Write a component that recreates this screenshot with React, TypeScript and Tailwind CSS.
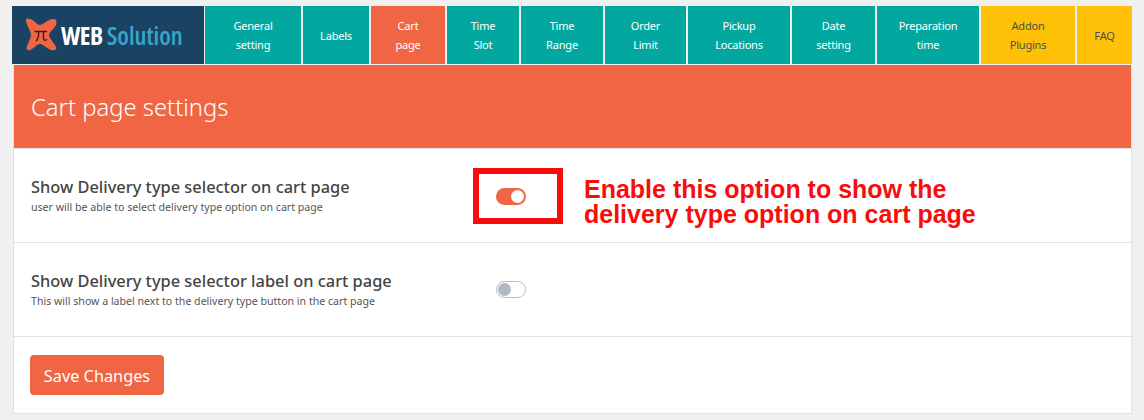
const tabs = [
  { lines: ["General", "setting"], width: "w-[96px]", color: "bg-[#02a79f] text-white" },
  { lines: ["Labels"], width: "w-[66px]", color: "bg-[#02a79f] text-white" },
  { lines: ["Cart", "page"], width: "w-[74px]", color: "bg-[#f06543] text-white" },
  { lines: ["Time", "Slot"], width: "w-[72px]", color: "bg-[#02a79f] text-white" },
  { lines: ["Time", "Range"], width: "w-[82px]", color: "bg-[#02a79f] text-white" },
  { lines: ["Order", "Limit"], width: "w-[81px]", color: "bg-[#02a79f] text-white" },
  { lines: ["Pickup", "Locations"], width: "w-[102px]", color: "bg-[#02a79f] text-white" },
  { lines: ["Date", "setting"], width: "w-[83px]", color: "bg-[#02a79f] text-white" },
  { lines: ["Preparation", "time"], width: "w-[102px]", color: "bg-[#02a79f] text-white" },
  { lines: ["Addon", "Plugins"], width: "w-[94px]", color: "bg-[#ffc107] text-[#4a4f57]" },
  { lines: ["FAQ"], width: "w-[55px]", color: "bg-[#ffc107] text-[#4a4f57]" },
];

function Logo() {
  return (
    <div className="flex h-full w-[192px] shrink-0 items-center bg-[#1a4262] pl-[12px]">
      <svg width="36" height="36" viewBox="0 0 36 36" className="shrink-0">
        <path
          d="M2 4 C1 1 4 1 6 2 C10 3 13 8 16 8 C19 8 24 2 29 2 C33 2 33 5 32 8 C30 12 25 15 25 18 C25 21 31 27 32 30 C33 33 30 34 27 33 C24 32 19 27 16 27 C13 27 9 32 6 33 C3 34 2 32 3 29 C4 26 7 21 7 18 C7 15 3 8 2 4 Z"
          fill="#f06543"
        />
        <path d="M10.5 14.5 H23 M14.5 14.5 C15 18.5 14 22 12 24 M19.5 14.5 V21 C19.5 24 22 24 23 22" fill="none" stroke="#3a1c14" strokeWidth="1.4" />
      </svg>
      <span className="ml-[1px] flex items-baseline font-['Open_Sans',sans-serif] text-[25px] leading-none font-bold tracking-[-0.5px] [font-stretch:75%]">
        <span className="text-white">WEB</span>
        <span className="ml-[4px] font-semibold tracking-[0px] text-[#3aa6c9]">Solution</span>
      </span>
    </div>
  );
}

function Toggle({ on }: { on: boolean }) {
  if (on) {
    return (
      <div className="flex h-[17px] w-[30px] items-center justify-end rounded-full bg-[#f06543] pr-[2px]">
        <div className="h-[13px] w-[13px] rounded-full bg-white" />
      </div>
    );
  }
  return (
    <div className="flex h-[17px] w-[30px] items-center rounded-full border border-[#b4bcc6] bg-white pl-[1px]">
      <div className="h-[13px] w-[13px] rounded-full bg-[#b0b8c1]" />
    </div>
  );
}

export default function App() {
  return (
    <div className="h-[420px] w-[1144px] overflow-hidden bg-[#f0f0f1] pt-[6px] pl-[12px] font-['Noto_Sans','Open_Sans',sans-serif]">
      <nav className="flex h-[58px] w-[1120px] gap-[2px]">
        <Logo />
        <div className="-ml-[1px] flex gap-[2px]">
          {tabs.map((tab) => (
            <div
              key={tab.lines[0]}
              className={`flex h-[58px] shrink-0 flex-col items-center justify-center text-[11px] leading-[19px] tracking-[-0.2px] ${tab.width} ${tab.color}`}
            >
              {tab.lines.map((line) => (
                <span key={line}>{line}</span>
              ))}
            </div>
          ))}
        </div>
      </nav>

      <div className="ml-[1px] h-[349px] w-[1119px] border border-t-0 border-[#e0e0e6] bg-white">
        <div className="mt-[1px] flex h-[83px] items-center bg-[#f06543] pt-[3px] pl-[17px] text-[23.8px] font-light text-white">
          Cart page settings
        </div>

        <div className="flex h-[95px] items-center border-t border-b border-[#e0e0e6] pl-[17px]">
          <div className="w-[442px] shrink-0">
            <div className="text-[16.4px] leading-[20px] font-medium text-[#444]">Show Delivery type selector on cart page</div>
            <div className="mt-[3px] text-[10.6px] leading-[14px] text-[#555]">user will be able to select delivery type option on cart page</div>
          </div>
          <div className="mt-[1px] flex h-[56px] w-[90px] shrink-0 items-center border-[6px] border-[#f80c0c] pl-[17px]">
            <Toggle on />
          </div>
          <div className="mt-[12px] ml-[21px] font-['Liberation_Sans',sans-serif] text-[25px] leading-[25px] font-bold text-[#f80c0c]">
            Enable this option to show the
            <br />
            delivery type option on cart page
          </div>
        </div>

        <div className="flex h-[94px] items-center border-b border-[#e0e0e6] pl-[17px]">
          <div className="w-[465px] shrink-0">
            <div className="text-[16.4px] leading-[20px] font-medium text-[#444]">Show Delivery type selector label on cart page</div>
            <div className="mt-[3px] text-[10.6px] leading-[14px] text-[#555]">This will show a label next to the delivery type button in the cart page</div>
          </div>
          <Toggle on={false} />
        </div>

        <div className="pt-[18px] pl-[16px]">
          <button className="flex h-[40px] w-[134px] items-center justify-center rounded-[4px] bg-[#f06543] pt-[2px] text-[16.3px] text-white">
            Save Changes
          </button>
        </div>
      </div>
    </div>
  );
}
